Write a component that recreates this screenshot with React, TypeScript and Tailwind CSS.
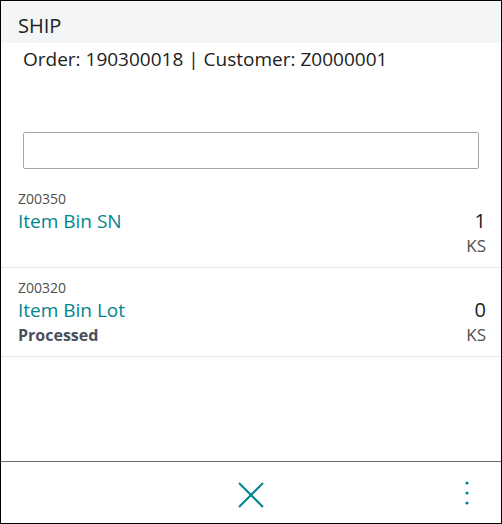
export default function App() {
  const items = [
    { code: "Z00350", name: "Item Bin SN", qty: "1", unit: "KS", status: "" },
    { code: "Z00320", name: "Item Bin Lot", qty: "0", unit: "KS", status: "Processed" },
  ];

  return (
    <div
      className="w-[502px] h-[524px] border border-black bg-white flex flex-col text-[#212121]"
      style={{ fontFamily: '"Open Sans", "Noto Sans", sans-serif' }}
    >
      {/* Header */}
      <div className="h-[42px] bg-[#f4f5f7] pl-[17px] pt-[11px] text-[20px] leading-[28px]">
        SHIP
      </div>
      <div className="mt-[2px] pl-[22px] text-[19px] leading-[28px]">
        Order: 190300018 | Customer: Z0000001
      </div>

      {/* Scan input */}
      <div className="mt-[59px] mx-[22px] mb-[10px]">
        <input
          type="text"
          className="block w-full h-[37px] border border-[#a6a6a6] rounded-[2px] outline-none px-2"
        />
      </div>

      {/* Lines */}
      <div className="flex flex-col">
        {items.map((it) => (
          <div
            key={it.code}
            className="flex justify-between pl-[17px] pr-[15px] pt-[11px] pb-[9px] border-b border-[#e6e6e6]"
          >
            <div className="flex flex-col">
              <span className="text-[14px] leading-[18px] text-[#505050]">{it.code}</span>
              <span className="text-[19px] leading-[26px] text-[#00858f]">{it.name}</span>
              <span className="text-[16px] leading-[24px] font-bold text-[#4a4f5a]">
                {it.status}
              </span>
            </div>
            <div className="flex flex-col items-end pt-[18px]">
              <span className="text-[20px] leading-[26px]">{it.qty}</span>
              <span className="text-[17px] leading-[24px] text-[#505050]">{it.unit}</span>
            </div>
          </div>
        ))}
      </div>

      <div className="flex-1" />

      {/* Footer */}
      <div className="h-[62px] border-t border-[#6b6b6b] grid grid-cols-[1fr_auto_1fr] items-center">
        <div />
        <button className="pt-[4px]">
          <svg width="26" height="26" viewBox="0 0 26 26">
            <line x1="1" y1="1" x2="25" y2="25" stroke="#00858f" strokeWidth="2" />
            <line x1="25" y1="1" x2="1" y2="25" stroke="#00858f" strokeWidth="2" />
          </svg>
        </button>
        <div className="flex justify-end pr-[32px]">
          <svg width="4" height="24" viewBox="0 0 4 24">
            <circle cx="2" cy="2" r="1.6" fill="#00858f" />
            <circle cx="2" cy="12" r="1.6" fill="#00858f" />
            <circle cx="2" cy="22" r="1.6" fill="#00858f" />
          </svg>
        </div>
      </div>
    </div>
  );
}
